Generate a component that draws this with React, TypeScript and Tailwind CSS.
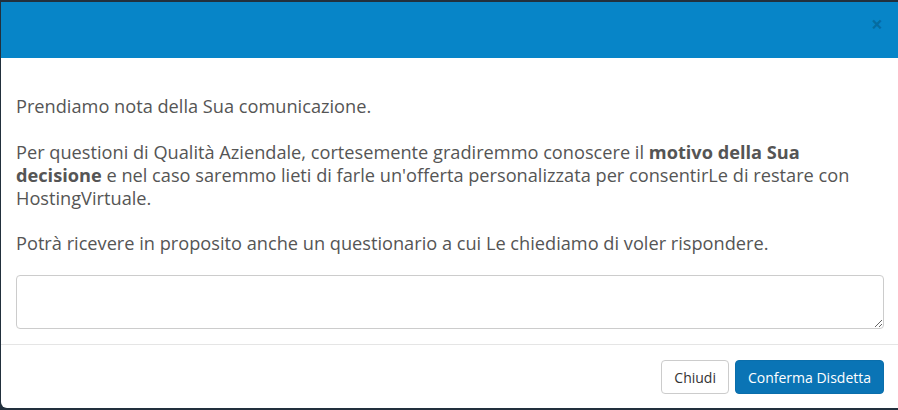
export default function App() {
  return (
    <div
      className="w-[898px] h-[410px] overflow-hidden bg-[#22303d] pt-[2px]"
      style={{ fontFamily: '"Open Sans", "Noto Sans", sans-serif' }}
    >
      <div className="ml-[1px] w-[898px] h-[406px] bg-white rounded-bl-[6px] flex flex-col">
        <div className="h-[56px] bg-[#0785c8] relative shrink-0">
          <span className="absolute right-[16px] top-[12px] text-[21px] font-bold leading-none text-black/20">
            ×
          </span>
        </div>
        <div className="px-[15px] pt-[37px] pb-[15px] text-[18.2px] leading-[23px] text-[#555]">
          <p className="mb-[23px]">Prendiamo nota della Sua comunicazione.</p>
          <p className="mb-[22px]">
            Per questioni di Qualità Aziendale, cortesemente gradiremmo conoscere il{" "}
            <b className="font-bold">motivo della Sua decisione</b> e nel caso saremmo lieti di farle
            un'offerta personalizzata per consentirLe di restare con HostingVirtuale.
          </p>
          <p className="mb-[20px]">
            Potrà ricevere in proposito anche un questionario a cui Le chiediamo di voler rispondere.
          </p>
          <textarea className="block w-full h-[54px] border border-[#ccc] rounded-[4px] px-3 py-1.5 text-[14px] outline-none resize-y" />
        </div>
        <div className="border-t border-[#e5e5e5] px-[15px] pt-[15px] flex justify-end gap-[6px]">
          <button className="h-[34px] px-[12px] border border-[#ccc] rounded-[4px] bg-white text-[14px] text-[#333]">
            Chiudi
          </button>
          <button className="h-[34px] px-[12px] border border-[#0a6eab] rounded-[4px] bg-[#0a74b5] text-[14px] text-white">
            Conferma Disdetta
          </button>
        </div>
      </div>
    </div>
  );
}
